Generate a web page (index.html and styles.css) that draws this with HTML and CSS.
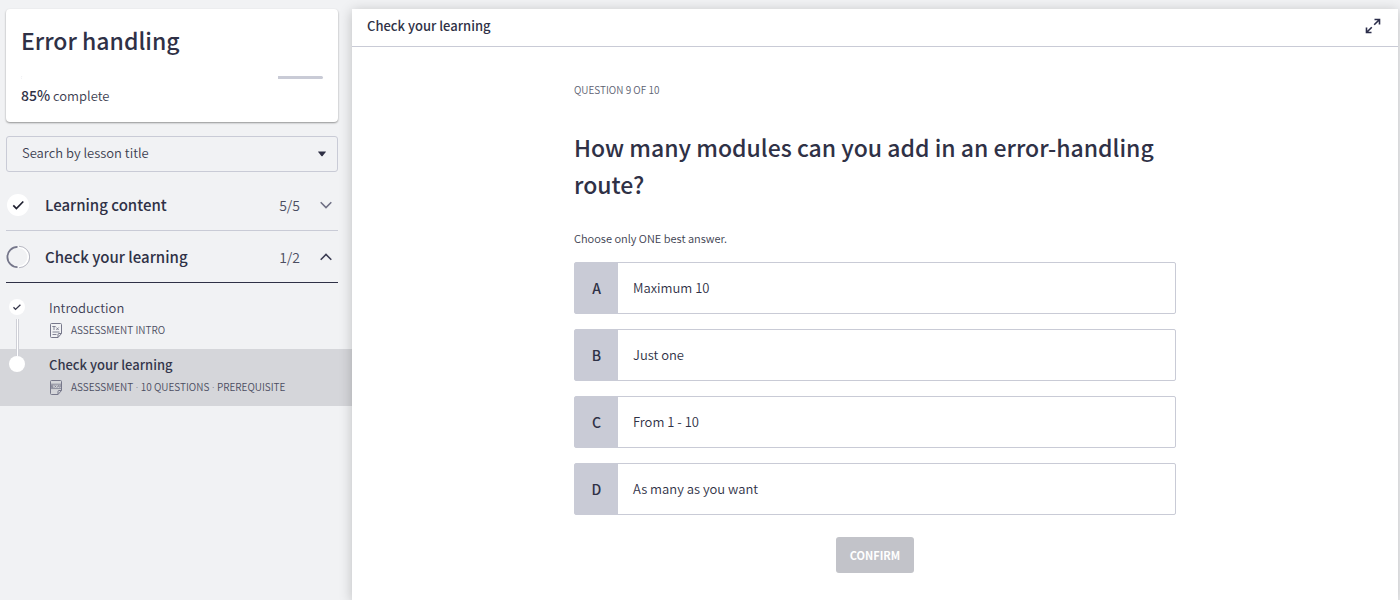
FILE: index.html
```html
<!DOCTYPE html>
<html lang="en">
<head>
<meta charset="utf-8">
<meta name="viewport" content="width=device-width, initial-scale=1">
<title>Error handling</title>
<link rel="stylesheet" href="styles.css">
</head>
<body>
<div class="app">
  <aside class="sidebar">
    <div class="sidebar-top">
      <section class="course-card">
        <h1 class="course-title">Error handling</h1>
        <div class="progress" role="progressbar" aria-label="Course progress" aria-valuenow="85" aria-valuemin="0" aria-valuemax="100">
          <div class="progress-done" style="width: 85%"></div>
        </div>
        <p class="course-status"><strong class="course-percent">85%</strong> complete</p>
      </section>
      <div class="search">
        <select class="search-select" aria-label="Search by lesson title">
          <option>Search by lesson title</option>
        </select>
        <svg class="search-caret" width="10" height="6" viewBox="0 0 10 6" aria-hidden="true"><path d="M1.500 .5h7q.8 0 .3.600L5.600 4.900q-.6.600-1.200 0L1.200 1.100Q.7.500 1.500 .5z" fill="#2f3044"/></svg>
      </div>
      <button class="section" type="button" aria-expanded="false">
        <svg class="section-mark" width="24" height="24" viewBox="0 0 24 24" aria-hidden="true"><circle cx="12" cy="12" r="11" fill="#fff"/><path d="M7.300 12.300l3.100 3.200 6.900-7" fill="none" stroke="#1f2030" stroke-width="1.700"/></svg>
        <span class="section-name">Learning content</span>
        <span class="section-count">5/5</span>
        <svg class="section-arrow" width="12" height="8" viewBox="0 0 12 8" aria-hidden="true"><path d="M.7 1.200L6 6.500l5.300-5.300" fill="none" stroke="#6f7084" stroke-width="1.600"/></svg>
      </button>
      <button class="section section-open" type="button" aria-expanded="true">
        <svg class="section-mark" width="24" height="24" viewBox="0 0 24 24" aria-hidden="true"><path d="M12.500 2.200a9.800 9.800 0 0 1 0 19.600" fill="none" stroke="#fff" stroke-width="1.800"/><path d="M13 1.300a10.700 10.700 0 0 1 0 21.400" fill="none" stroke="#a5a6b3" stroke-width=".8"/><path d="M11.500 1.900a10.100 10.100 0 0 0 0 20.200" fill="none" stroke="#75768a" stroke-width="1.800"/></svg>
        <span class="section-name">Check your learning</span>
        <span class="section-count">1/2</span>
        <svg class="section-arrow" width="12" height="8" viewBox="0 0 12 8" aria-hidden="true"><path d="M.7 6.800L6 1.500l5.300 5.300" fill="none" stroke="#3b3c52" stroke-width="1.600"/></svg>
      </button>
    </div>
    <ul class="lessons">
      <li class="lesson">
        <span class="lesson-mark">
          <svg width="16" height="16" viewBox="0 0 16 16" aria-hidden="true"><circle cx="8" cy="8" r="8" fill="#fff"/><path d="M4.500 8.300l2 2.100 4.900-4.700" fill="none" stroke="#35364a" stroke-width="1.300"/></svg>
          <span class="lesson-rail"></span>
        </span>
        <div class="lesson-body">
          <div class="lesson-name">Introduction</div>
          <div class="lesson-meta">
            <svg class="lesson-icon" width="12" height="15" viewBox="0 0 12 15" aria-hidden="true" fill="none" stroke="#77788b"><path d="M1.500.5h9q1 0 1 1V10.500L8 14.500H1.500q-1 0-1-1v-12q0-1 1-1zM8 14.500v-3q0-1 1-1h2.500"/><path d="M2.300 3.500h3.400M4 3.500v3.500M6.300 4.500l2.400 2.500M8.700 4.500L6.300 7M2.500 9h7M2.500 11.500h4" stroke-width=".9"/></svg>
            <span>ASSESSMENT INTRO</span>
          </div>
        </div>
      </li>
      <li class="lesson lesson-current" aria-current="step">
        <span class="lesson-mark">
          <svg width="16" height="16" viewBox="0 0 16 16" aria-hidden="true"><circle cx="8" cy="8" r="8" fill="#fff"/></svg>
        </span>
        <div class="lesson-body">
          <div class="lesson-name">Check your learning</div>
          <div class="lesson-meta">
            <svg class="lesson-icon" width="12" height="15" viewBox="0 0 12 15" aria-hidden="true" fill="none" stroke="#77788b"><path d="M.5 13.500v-12q0-1 1-1h9q1 0 1 1v9L8 14.500H1.500q-1 0-1-1M8 14.500v-3q0-1 1-1h2.500"/><path d="M.5 4.200h11M.5 8.600h11M3.500 5.300H1.300v2.200h2.200M1.300 6.400h2M4.500 5.300l1.800 2.200M6.300 5.300L4.500 7.500M7.300 7.500l1-2.200 1 2.200M10 7.500V5.300l.8 1 .8-1v2.200" stroke-width=".8"/></svg>
            <span>ASSESSMENT<span class="dot"> · </span>10 QUESTIONS<span class="dot"> · </span>PREREQUISITE</span>
          </div>
        </div>
      </li>
    </ul>
  </aside>
  <main class="panel">
    <header class="panel-header">
      <h2 class="panel-title">Check your learning</h2>
      <button class="expand" type="button" aria-label="Full screen">
        <svg width="16" height="16" viewBox="0 0 16 16" aria-hidden="true" fill="none" stroke="#2b2d4a" stroke-width="1.600"><path d="M9.500 1.500h5v5M14.500 1.500l-5.300 5.300M6.500 14.500h-5v-5M1.500 14.500l5.300-5.300"/></svg>
      </button>
    </header>
    <form class="quiz">
      <p class="quiz-step">QUESTION 9 OF 10</p>
      <h3 class="quiz-question" id="question">How many modules can you add in an error-handling route?</h3>
      <p class="quiz-hint">Choose only ONE best answer.</p>
      <div class="answers" role="radiogroup" aria-labelledby="question">
        <label class="answer"><input class="answer-input" type="radio" name="answer" value="a"><span class="answer-key">A</span><span class="answer-text">Maximum 10</span></label>
        <label class="answer"><input class="answer-input" type="radio" name="answer" value="b"><span class="answer-key">B</span><span class="answer-text">Just one</span></label>
        <label class="answer"><input class="answer-input" type="radio" name="answer" value="c"><span class="answer-key">C</span><span class="answer-text">From 1 - 10</span></label>
        <label class="answer"><input class="answer-input" type="radio" name="answer" value="d"><span class="answer-key">D</span><span class="answer-text">As many as you want</span></label>
      </div>
      <button class="confirm" type="submit" disabled>CONFIRM</button>
    </form>
  </main>
</div>
</body>
</html>
```

FILE: styles.css
```css
* {
  box-sizing: border-box;
}

body {
  margin: 0;
  background: #f1f2f4;
  color: #2f3146;
  font-family: "Noto Sans CJK SC", "Noto Sans", sans-serif;
  font-size: 13px;
  font-weight: 350;
  line-height: 20px;
}

h1, h2, h3, p, ul {
  margin: 0;
  padding: 0;
}

button, select {
  font: inherit;
  color: inherit;
}

.app {
  display: grid;
  grid-template-columns: 352px 1fr;
  min-height: 100vh;
  padding: 9px 2px 0 0;
}

.sidebar-top {
  padding: 0 14px 0 6px;
}

.course-card {
  padding: 13px 15px 16px;
  border-radius: 4px;
  background: #fff;
  box-shadow: 0 1px 2px rgba(0, 0, 0, 0.4);
}

.course-title {
  font-size: 23px;
  font-weight: 500;
  line-height: 36px;
}

.progress {
  margin: 18px 0 6px;
  height: 3px;
  border-radius: 2px;
  background: #c9cbd6;
  overflow: hidden;
}

.progress-done {
  height: 100%;
  background: #fff;
}

.course-status {
  color: #3c3e50;
}

.course-percent {
  color: #2f3146;
  font-size: 14px;
  font-weight: 500;
}

.search {
  display: grid;
  align-items: center;
  margin: 14px 0 7px;
}

.search-select {
  grid-area: 1 / 1;
  width: 100%;
  height: 36px;
  padding: 0 32px 2px 15px;
  border: 1px solid #c9cbd6;
  border-radius: 3px;
  appearance: none;
  background: transparent;
  color: #3c3e50;
}

.search-caret {
  grid-area: 1 / 1;
  justify-self: end;
  margin-right: 11px;
  pointer-events: none;
}

.section {
  display: flex;
  align-items: center;
  width: 100%;
  height: 52px;
  padding: 0 6px 0 0;
  border: 0;
  border-bottom: 1px solid #c9cbd6;
  background: transparent;
  text-align: left;
}

.section-open {
  border-color: #2f3146;
}

.section-name {
  flex: 1;
  margin-left: 15px;
  font-size: 15px;
  font-weight: 500;
}

.section-count {
  margin-right: 20px;
  color: #4b4d61;
  font-size: 14px;
}

.lessons {
  padding-top: 9px;
  list-style: none;
}

.lesson {
  display: flex;
  height: 57px;
  padding: 7px 0 0 9px;
}

.lesson-current {
  background: #d5d6da;
}

.lesson-mark {
  display: flex;
  flex-direction: column;
  align-items: center;
  width: 16px;
}

.lesson-rail {
  flex: 1;
  width: 3px;
  margin: 4px 0 -7px;
  border: solid #cfd0d7;
  border-width: 0 1px;
  background: #fff;
}

.lesson-body {
  margin-left: 24px;
}

.lesson-name {
  color: #3f4156;
  line-height: 18px;
}

.lesson-current .lesson-name {
  color: #34364b;
  font-weight: 500;
}

.lesson-meta {
  display: flex;
  align-items: center;
  gap: 9px;
  margin: 5px 0 0 1px;
  color: #4b4d61;
  font-size: 10px;
  line-height: 16px;
}

.dot {
  font-family: "Open Sans", sans-serif;
}

.panel {
  background: #fff;
  box-shadow: 0 2px 12px rgba(0, 0, 0, 0.22);
}

.panel-header {
  display: flex;
  align-items: center;
  justify-content: space-between;
  height: 38px;
  padding: 0 17px 3px 15px;
  border-bottom: 1px solid #c9cbd6;
}

.panel-title {
  font-size: 13px;
  font-weight: 500;
}

.expand {
  display: flex;
  padding: 0;
  border: 0;
  background: transparent;
}

.quiz {
  display: flex;
  flex-direction: column;
  max-width: 602px;
  margin: 0 auto;
  padding: 35px 0 24px;
}

.quiz-step {
  color: #5d5f72;
  font-size: 10px;
  line-height: 16px;
}

.quiz-question {
  margin: 31px 0 25px;
  font-size: 23px;
  font-weight: 500;
  line-height: 37px;
}

.quiz-hint {
  color: #3c3e50;
  font-size: 11px;
}

.answers {
  display: grid;
  gap: 15px;
  margin-top: 14px;
}

.answer {
  display: flex;
  height: 52px;
  border: 1px solid #c9cbd6;
  border-radius: 2px;
}

.answer:focus-within {
  outline: 2px solid #6f7084;
}

.answer-input {
  position: absolute;
  margin: 0;
  opacity: 0;
}

.answer-key {
  display: grid;
  place-items: center;
  width: 43px;
  background: #c9cbd6;
  font-size: 14px;
  font-weight: 500;
}

.answer-text {
  display: flex;
  align-items: center;
  padding: 0 15px;
  color: #2f3146;
}

.confirm {
  align-self: center;
  height: 36px;
  margin-top: 22px;
  padding: 0 14px;
  border: 0;
  border-radius: 3px;
  background: #c2c3c9;
  color: #fff;
  font-size: 11px;
  font-weight: 700;
}
```
